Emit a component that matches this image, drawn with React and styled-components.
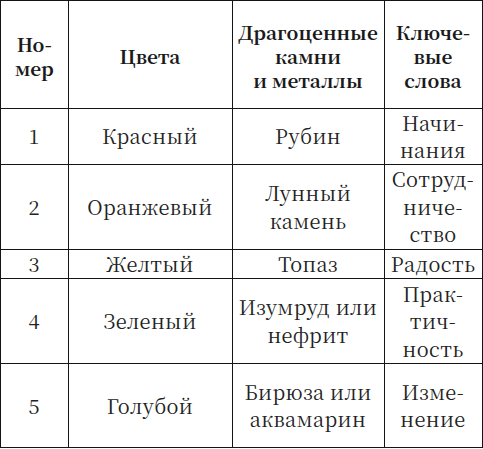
import React from "react";
import styled, { createGlobalStyle } from "styled-components";

const Global = createGlobalStyle`
  html, body { margin: 0; padding: 0; background: #fff; }
`;

const Table = styled.div`
  display: grid;
  width: 483px;
  grid-template-columns: 67.5px 164px 152px 98px;
  grid-template-rows: 107.5px 56px 85px 29.5px 84.5px 84.5px;
  border-left: 1.5px solid #141414;
  border-top: 1.5px solid #141414;
  box-sizing: border-box;
  background: #fff;
`;

const Cell = styled.div`
  box-sizing: border-box;
  border-right: 1.5px solid #141414;
  border-bottom: 1.5px solid #141414;
  display: flex;
  align-items: center;
  justify-content: center;
  text-align: center;
  padding: ${(p) => (p.$head ? "4px 1px 0" : "0 1px")};
  white-space: nowrap;
  overflow: hidden;
`;

const Text = styled.span`
  display: block;
  font-family: ${(p) => p.$font};
  font-size: ${(p) => (p.$head ? "19px" : "20px")};
  font-weight: ${(p) => (p.$head ? 700 : 400)};
  line-height: ${(p) => (p.$head ? "24px" : "27.5px")};
  letter-spacing: ${(p) => (p.$head ? "0px" : "0.4px")};
  color: ${(p) => (p.$head ? "#1a1a1a" : "#222")};
`;

const FONT = '"Noto Serif CJK SC", "Liberation Serif", serif';

const Lines = ({ text }) =>
  text.split("\n").map((l, i, a) => (
    <React.Fragment key={i}>
      {l}
      {i < a.length - 1 && <br />}
    </React.Fragment>
  ));

const header = ["Но-\nмер", "Цвета", "Драгоценные\nкамни\nи металлы", "Ключе-\nвые\nслова"];

const rows = [
  ["1", "Красный", "Рубин", "Начи-\nнания"],
  ["2", "Оранжевый", "Лунный\nкамень", "Сотруд-\nниче-\nство"],
  ["3", "Желтый", "Топаз", "Радость"],
  ["4", "Зеленый", "Изумруд или\nнефрит", "Прак-\nтич-\nность"],
  ["5", "Голубой", "Бирюза или\nаквамарин", "Изме-\nнение"],
];

export default function App() {
  return (
    <>
      <Global />
      <Table>
        {header.map((h, i) => (
          <Cell key={"h" + i} $head>
            <Text $head $font={FONT}>
              <Lines text={h} />
            </Text>
          </Cell>
        ))}
        {rows.map((r, ri) =>
          r.map((c, ci) => (
            <Cell key={ri + "-" + ci}>
              <Text $font={FONT}>
                <Lines text={c} />
              </Text>
            </Cell>
          ))
        )}
      </Table>
    </>
  );
}
